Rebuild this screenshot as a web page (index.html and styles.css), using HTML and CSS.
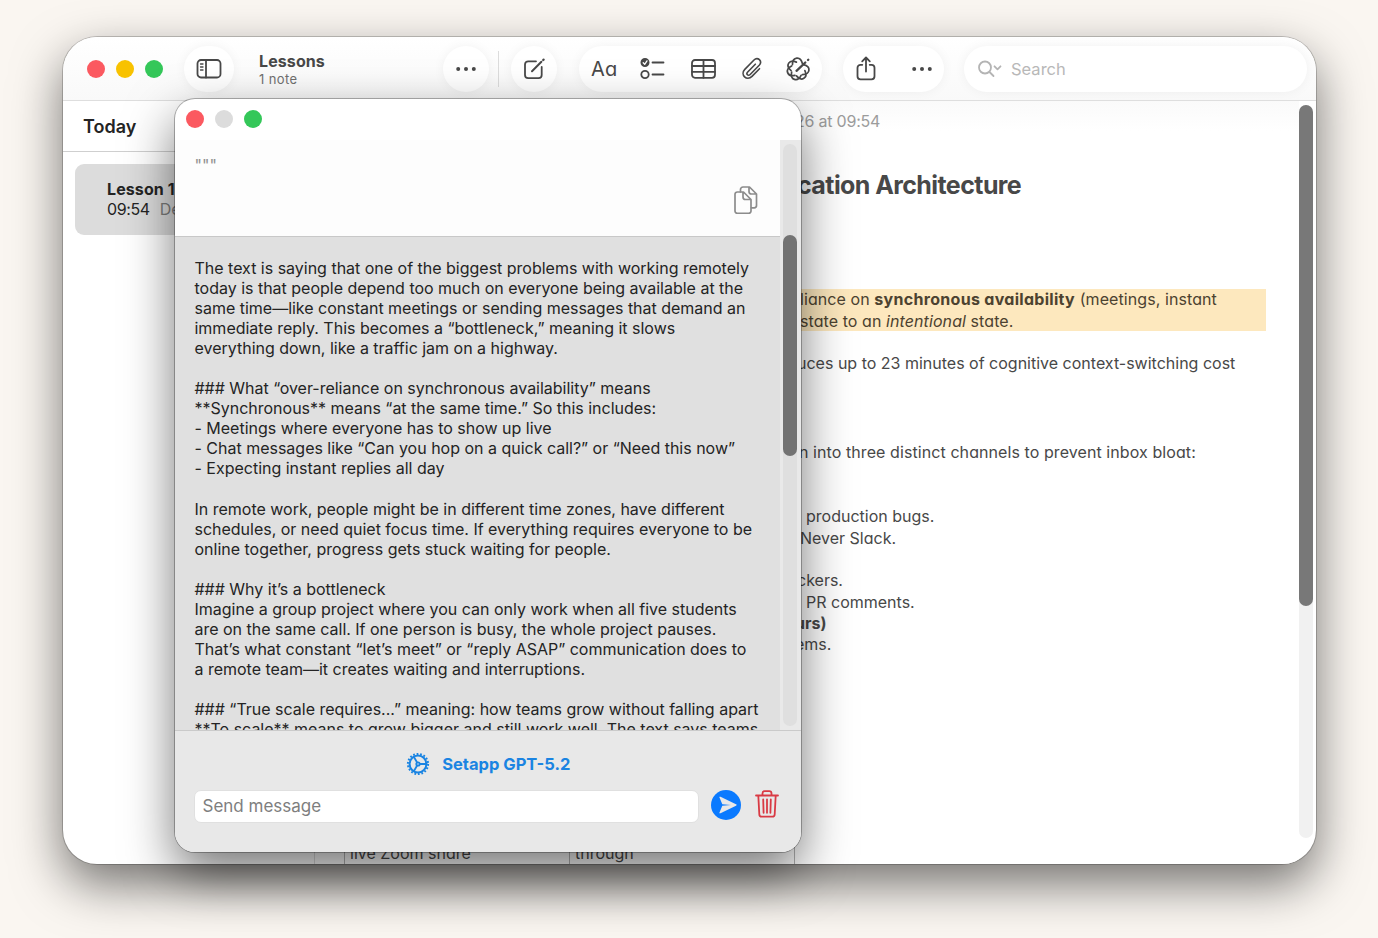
FILE: index.html
```html
<!DOCTYPE html>
<html lang="en">
<head>
  <meta charset="UTF-8">
  <meta name="viewport" content="width=device-width, initial-scale=1.0">
  <title>Lessons</title>
  <link rel="stylesheet" href="styles.css">
</head>
<body>
  <div class="window notes">
    <header class="toolbar">
      <div class="lights"><i class="red"></i><i class="yellow"></i><i class="green"></i></div>
      <button class="pill sidebar-btn">
        <svg width="26" height="20" viewBox="0 0 26 20"><rect x="1.500" y="1" width="23" height="17.500" rx="3.500"/><path d="M10 1v17.500"/><path d="M4.500 5h2.500M4.500 8h2.500M4.500 11h2.500" stroke-width="1.300"/></svg>
      </button>
      <div class="title"><b>Lessons</b><span>1 note</span></div>
      <button class="pill more-btn">
        <svg class="dots" width="20" height="6" viewBox="0 0 20 6"><circle cx="2.2" cy="3" r="2"/><circle cx="10" cy="3" r="2"/><circle cx="17.8" cy="3" r="2"/></svg>
      </button>
      <div class="sep"></div>
      <button class="pill compose-btn">
        <svg width="22" height="22" viewBox="0 0 22 22"><path d="M13 3.300H5.200A3.200 3.200 0 0 0 2 6.500V17a3.200 3.200 0 0 0 3.200 3.200H15.500A3.200 3.200 0 0 0 18.700 17V9"/><path d="M9 13.200L18.400 3.800" stroke-width="2"/><path d="M20.200 2l.4-.4" stroke-width="2.200"/></svg>
      </button>
      <div class="pill format">
        <span class="aa">Aa</span>
        <svg class="ic-list" width="25" height="23" viewBox="0 0 25 23"><circle cx="5" cy="5.500" r="3.600" class="solid"/><path d="M3.200 5.700l1.500 1.600 2.300-3.400" stroke="#fff" stroke-width="1.300"/><circle cx="5" cy="17.500" r="3.700"/><path d="M12.500 5.500H23.500M12.500 17.500H23.500"/></svg>
        <svg class="ic-table" width="26" height="20" viewBox="0 0 26 20"><rect x="1" y="1" width="23" height="17.800" rx="3"/><path d="M1 7h23M1 12.800h23M12.500 1v17.800"/></svg>
        <svg class="ic-clip" width="22" height="24" viewBox="0 0 22 24"><path d="M14.300 7.200L6.500 15.200c-1.700 1.800.7 4.200 2.400 2.500l9.300-9.500c3.700-4-1.500-9-5.200-5.200L3.800 12.400c-5 5.300 2 12.200 7.200 7l7.500-7.700" stroke-width="1.600"/></svg>
        <svg class="ic-magic" width="26" height="26" viewBox="-13 -13 26 26">
          <g stroke-width="1.700">
            <path d="M5 -5C13 -4 13 4 5 5" transform="rotate(6.400)"/>
            <path d="M5 -5C13 -4 13 4 5 5" transform="rotate(57.800)"/>
            <path d="M5 -5C13 -4 13 4 5 5" transform="rotate(109.200)"/>
            <path d="M5 -5C13 -4 13 4 5 5" transform="rotate(160.700)"/>
            <path d="M5 -5C13 -4 13 4 5 5" transform="rotate(212.100)"/>
            <path d="M5 -5C13 -4 13 4 5 5" transform="rotate(263.500)"/>
          </g>
          <path d="M-1.500 1.800L7.300 -6.500M10 -9l.3-.3" stroke-width="2.300"/>
        </svg>
      </div>
      <div class="pill share">
        <svg width="20" height="25" viewBox="0 0 20 25"><path d="M6.300 8.800H4.500A3 3 0 0 0 1.500 11.800v8.500A3 3 0 0 0 4.500 23.300h11a3 3 0 0 0 3-3v-8.500a3 3 0 0 0-3-3h-1.800M10 15.500V1.700M6.200 5.300L10 1.500l3.800 3.800"/></svg>
        <svg class="dots" width="20" height="6" viewBox="0 0 20 6"><circle cx="2.200" cy="3" r="2"/><circle cx="10" cy="3" r="2"/><circle cx="17.800" cy="3" r="2"/></svg>
      </div>
      <div class="pill search">
        <svg width="24" height="18" viewBox="0 0 24 18"><circle cx="7" cy="7.500" r="6"/><path d="M11.500 12l4 4"/><path d="M16.500 6.300l3 3 3-3"/></svg>
        <span>Search</span>
      </div>
    </header>

    <div class="panes">
      <aside class="sidebar">
        <h2>Today</h2>
        <div class="note-item">
          <b>Lesson 1</b>
          <span>09:54 <em>Def</em></span>
        </div>
      </aside>

      <main class="note">
        <div class="note-text">
          <p class="date">26 at 09:54</p>
          <h1>cation Architecture</h1>
          <p class="marked">liance on <b>synchronous availability</b> (meetings, instant<br>state to an <i>intentional</i> state.</p>
          <p class="cost">uces up to 23 minutes of cognitive context-switching cost</p>
          <p class="channels">n into three distinct channels to prevent inbox bloat:</p>
          <p class="inset">production bugs.</p>
          <p class="never">Never Slack.</p>
          <p class="gap">ckers.</p>
          <p class="inset">PR comments.</p>
          <p class="hang"><b>urs)</b></p>
          <p class="hang">ems.</p>
        </div>
        <div class="note-table"><div>live Zoom share</div><div>through</div></div>
      </main>
      <div class="page-scroll"><div class="thumb"></div></div>
    </div>
  </div>

  <div class="window chat">
    <header class="chat-bar">
      <div class="lights"><i class="red"></i><i class="off"></i><i class="green"></i></div>
    </header>
    <div class="chat-body">
      <div class="messages">
        <div class="msg-user">
          <span>"""</span>
          <svg width="24" height="28" viewBox="0 0 24 28"><path d="M6.500 6V3.500A2.500 2.500 0 0 1 9 1h6.500L22.500 8v11.500a2.300 2.300 0 0 1-2.300 2.300H17.500M15 1v4.500a2.500 2.500 0 0 0 2.500 2.500h5"/><path d="M3.300 6H9.500L17 13.500V25a2.300 2.300 0 0 1-2.300 2.300H3.300A2.300 2.300 0 0 1 1 25V8.300A2.300 2.300 0 0 1 3.300 6zM9 6v5a2.500 2.500 0 0 0 2.500 2.500h5.500"/></svg>
        </div>
        <div class="msg-bot">The text is saying that one of the biggest problems with working remotely
today is that people depend too much on everyone being available at the
same time—like constant meetings or sending messages that demand an
immediate reply. This becomes a “bottleneck,” meaning it slows
everything down, like a traffic jam on a highway.

### What “over-reliance on synchronous availability” means
**Synchronous** means “at the same time.” So this includes:
- Meetings where everyone has to show up live
- Chat messages like “Can you hop on a quick call?” or “Need this now”
- Expecting instant replies all day

In remote work, people might be in different time zones, have different
schedules, or need quiet focus time. If everything requires everyone to be
online together, progress gets stuck waiting for people.

### Why it’s a bottleneck
Imagine a group project where you can only work when all five students
are on the same call. If one person is busy, the whole project pauses.
That’s what constant “let’s meet” or “reply ASAP” communication does to
a remote team—it creates waiting and interruptions.

### “True scale requires...” meaning: how teams grow without falling apart
**To scale** means to grow bigger and still work well. The text says teams</div>
      </div>
      <div class="chat-scroll"><div class="track"><div class="thumb"></div></div></div>
    </div>
    <footer class="composer">
      <div class="model">
        <svg width="24" height="24" viewBox="0 0 24 24"><circle cx="12" cy="12" r="8.400" stroke-width="2"/><circle cx="12" cy="12" r="10.100" class="teeth"/><circle cx="12" cy="12" r="1.700"/><path d="M14 12h6.400M11 10.300L7.800 4.800M11 13.700L7.800 19.200"/></svg>
        <span>Setapp GPT-5.2</span>
      </div>
      <div class="send-row">
        <input type="text" placeholder="Send message">
        <svg class="send" width="30" height="30" viewBox="0 0 30 30"><circle cx="15" cy="15" r="15"/><path d="M8.500 7.500C8 6.500 8.800 6.500 9.500 6.800L25 14.300c.9.400.9 1 0 1.400L9.500 23.200c-.7.300-1.500.3-1-.7L11.300 15.800 20 15 11.300 14.200z"/></svg>
        <svg class="trash" width="24" height="28" viewBox="0 0 24 28"><path d="M1 5.500h22M7.500 5.500V3.500A2.300 2.300 0 0 1 9.800 1.200h4.400a2.300 2.300 0 0 1 2.300 2.300v2M3.300 5.500l1 18.700a2.500 2.500 0 0 0 2.500 2.500h10.400a2.500 2.500 0 0 0 2.500-2.500l1-18.700M8.200 9.500l.4 13.300M12 9.500v13.300M15.800 9.500l-.4 13.300"/></svg>
      </div>
    </footer>
  </div>
</body>
</html>
```
FILE: styles.css
```css
* { box-sizing: border-box; }
body { margin: 0; height: 938px; overflow: hidden; position: relative; background: #faf6f1; font-family: Inter, "Liberation Sans", sans-serif; color: #242424; }
h1, h2, p { margin: 0; }
svg { display: block; flex: none; fill: none; stroke: #484848; stroke-width: 1.8; stroke-linecap: round; stroke-linejoin: round; }
button { border: 0; padding: 0; }

.window { position: absolute; display: flex; flex-direction: column; overflow: hidden; background: #fff; }
.notes { left: 63px; top: 37px; width: 1253px; height: 827px; border-radius: 34px; box-shadow: 0 0 0 1px rgba(0,0,0,.2), 0 20px 50px rgba(0,0,0,.54); }
.chat { left: 174.5px; top: 99px; width: 626.5px; height: 753px; border-radius: 20px; box-shadow: 0 0 0 1px rgba(0,0,0,.28), 0 20px 50px rgba(0,0,0,.54); }

.lights { display: flex; gap: 11px; }
.lights i { width: 18px; height: 18px; border-radius: 50%; }
.red { background: #fb5960; }
.yellow { background: #f8c200; }
.green { background: #34c759; }
.off { background: #dcdcdc; }

/* toolbar */
.toolbar { flex: none; height: 64px; display: flex; align-items: center; padding-left: 23.5px; border-bottom: 1px solid #dedede; background: linear-gradient(#fff, #f9f9f9); }
.pill { height: 46px; display: flex; align-items: center; justify-content: center; border-radius: 23px; background: #fff; box-shadow: 0 0 12px rgba(0,0,0,.05); }
.sidebar-btn { width: 50px; margin-left: 21px; }
.title { width: 184px; margin-left: 25.5px; padding-top: 1px; display: flex; flex-direction: column; color: #484848; }
.title b { font-size: 16px; line-height: 20px; letter-spacing: .1px; }
.title span { font-size: 13px; line-height: 17px; color: #707070; letter-spacing: .4px; }
.more-btn { width: 46px; }
.dots { fill: #484848; stroke: none; }
.sep { width: 1px; height: 36px; margin: 0 12px 0 9px; background: #dcdcdc; }
.compose-btn { width: 46px; }
.format { width: 243px; margin-left: 22px; justify-content: flex-start; padding-left: 12px; }
.aa { width: 27px; font-size: 20px; letter-spacing: .2px; color: #484848; font-feature-settings: "cv11"; }
.ic-list { margin-left: 22px; }
.solid { fill: #484848; }
.ic-table { margin-left: 26px; }
.ic-clip { margin-left: 24px; }
.ic-magic { margin-left: 22px; }
.share { width: 101px; margin-left: 21px; gap: 36px; }
.search { width: 343px; margin-left: 20px; justify-content: flex-start; padding-left: 14px; gap: 9px; font-size: 16.500px; color: #b8b8b8; }
.search svg { stroke: #b4b4b4; }

/* notes list and page */
.panes { flex: 1; display: flex; min-height: 0; }
.sidebar { width: 252px; border-right: 1px solid #dcdcdc; }
.sidebar h2 { height: 51px; padding-left: 20px; border-bottom: 1px solid #cfcfcf; font-size: 18px; line-height: 52px; font-weight: 600; }
.note-item { height: 71px; margin: 12px 12px 0 12px; padding: 16px 0 0 32px; border-radius: 9px; background: #dcdcdc; display: flex; flex-direction: column; font-size: 16px; line-height: 19.500px; }
.note-item b { letter-spacing: .1px; }
.note-item span { letter-spacing: -.4px; }
.note-item em { margin-left: 6px; font-style: normal; letter-spacing: 0; color: #7c7c7c; }
.note { flex: 1; display: flex; flex-direction: column; justify-content: space-between; background: linear-gradient(#fafafa, #fff 30px); }
.note-text { padding-left: 484px; color: #484848; font-size: 16px; line-height: 21.370px; font-feature-settings: "cv11"; white-space: nowrap; }
.date { padding-top: 10px; margin-left: -4px; letter-spacing: -.22px; color: #9c9c9c; font-feature-settings: normal; }
.note-text h1 { margin: 35px 0 0 -2px; font-size: 25px; line-height: 36px; letter-spacing: -.58px; font-feature-settings: normal; }
.marked { margin: 86px 33px 0 0; padding-left: 1px; letter-spacing: .08px; background: #fde8be; color: #4c4230; height: 42px; }
.marked b { letter-spacing: .3px; }
.cost { margin: 22px 0 0 -2px; }
.channels { margin: 67px 0 43px; letter-spacing: .08px; }
.inset { padding-left: 7px; }
.never { padding-left: 1px; }
.hang { margin-left: -4px; }
.gap { margin: 21.370px 0 0 -2px; }
.note-table { height: 20px; margin-left: 29px; width: 451px; border-right: 1px solid #b4b4b4; display: flex; font-size: 16px; line-height: 19px; color: #484848; font-feature-settings: "cv11"; }
.note-table div { width: 226px; padding-left: 5px; border-left: 1px solid #b4b4b4; }
.page-scroll { width: 14px; height: 733px; margin: 4px 3.5px 0 -.5px; border-radius: 7px; background: #f1f1f1; }
.thumb { border-radius: 7px; background: #787878; }
.page-scroll .thumb { height: 501px; }

/* chat window */
.chat-bar { flex: none; height: 41px; display: flex; align-items: center; padding-left: 11px; }
.chat-bar .lights { margin-top: -1px; }
.chat-body { height: 590px; display: flex; }
.messages { width: 605.5px; overflow: hidden; }
.msg-user { height: 97px; display: flex; justify-content: space-between; padding: 15px 22px 0 20px; border-bottom: 1px solid #c8c8c8; background: #fdfdfd; font-size: 16px; line-height: 20px; color: #909090; }
.msg-user svg { margin-top: 31px; stroke: #8c8c8c; stroke-width: 1.700; }
.msg-bot { padding: 21px 0 0 20px; background: #e0e0e0; font-size: 16px; line-height: 20.040px; letter-spacing: -.01px; white-space: pre; }
.chat-scroll { flex: 1; padding: 4px 3px 4px 3px; background: #e9e9e9; }
.track { height: 582px; width: 14px; padding-top: 91px; border-radius: 7px; background: #dfdfdf; }
.track .thumb { height: 221px; background: #737373; }
.composer { flex: 1; border-top: 1px solid #cacaca; background: #e8e8e8; }
.model { height: 59px; padding: 7px 0 0 1px; display: flex; align-items: center; justify-content: center; gap: 12px; color: #1a84e2; font-size: 16.500px; font-weight: 700; }
.model svg { stroke: #1a84e2; }
.teeth { stroke-width: 2; stroke-dasharray: 1.765 1.765; stroke-linecap: butt; }
.send-row { display: flex; align-items: center; padding-left: 19px; height: 32px; }
.send-row input { width: 505px; height: 33px; padding: 0 8px; border: 1px solid #e0e0e0; border-radius: 7px; background: #fff; font: 17px Inter, "Liberation Sans", sans-serif; }
.send-row input::placeholder { color: #7e7e7e; }
.send { margin: -3px 14.500px 0 12px; stroke: none; fill: #0a7aff; }
.send path { fill: #e8e8e8; }
.trash { margin-top: -5px; stroke: #d93a44; }
```
